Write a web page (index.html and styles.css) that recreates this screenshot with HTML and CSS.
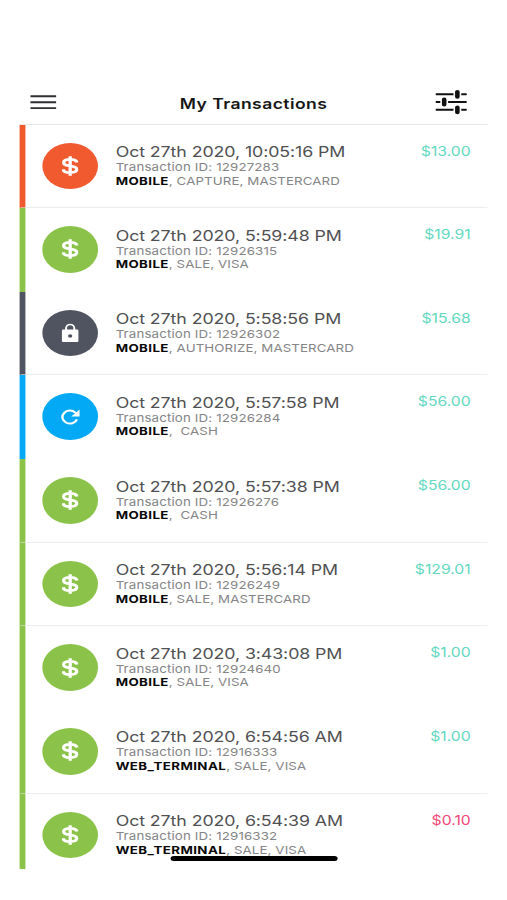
FILE: index.html
```
<!DOCTYPE html>
<html lang="en">
<head>
<meta charset="utf-8">
<title>My Transactions</title>
<link rel="stylesheet" href="styles.css">
</head>
<body>
<svg class="defs" aria-hidden="true">
  <symbol id="dollar" viewBox="0 0 14 20"><path d="M7 .2v3.2M7 16.6v3.2M12.700 6.5C12.100 4.3 10 3.400 7 3.400 3.700 3.400 1.600 4.500 1.600 6.7c0 4.6 10.900 2 10.900 6.6 0 2.1-2.200 3.300-5.500 3.300-3.300 0-5.500-1-5.900-3.4M7 3v14" fill="none" stroke="currentColor" stroke-width="2.7"/></symbol>
  <symbol id="lock" viewBox="0 0 14 20"><path d="M3.6 8V5.2a3.4 3.7 0 0 1 6.8 0V8" fill="none" stroke="currentColor" stroke-width="1.6"/><path fill-rule="evenodd" fill="currentColor" d="M1.3 6.500h11.4Q14 6.500 14 7.800v9.900q0 1.3-1.3 1.3H1.3Q0 19 0 17.700V7.800Q0 6.500 1.300 6.500zM7 11.200a1.800 1.800 0 1 0 0 3.600 1.800 1.800 0 0 0 0-3.600z"/></symbol>
  <symbol id="refresh" viewBox="0 0 16 16"><path d="M13.600 10.400A6.200 6.500 0 1 1 12.300 3.600L14 5.300" fill="none" stroke="currentColor" stroke-width="2"/><path fill="currentColor" d="M15.800 .5v7H8.900z"/></symbol>
</svg>
<div class="screen">
  <header class="header">
    <svg class="menu" viewBox="0 0 22 14"><path d="M0 1.300h21.400M0 7.200h21.400M0 13.100h21.400" stroke="#303034" stroke-width="1.900"/></svg>
    <h1 class="heading">My Transactions</h1>
    <svg class="filter" viewBox="0 0 26 26"><path d="M.6 5.300h24.300M.6 13h24.300M.6 20.800h24.300" stroke="#111" stroke-width="2" stroke-linecap="round"/><path d="M14.800 5.300h6.400M3.900 13h6.400M14.800 20.800h6.400" stroke="#fff" stroke-width="3"/><path d="M18 2.800v5M7.100 10.500v5M18 18.300v5" stroke="#111" stroke-width="3.800" stroke-linecap="round"/></svg>
  </header>
  <main class="list">
    <article class="row orange line"><div class="badge"><svg><use href="#dollar"/></svg></div><div class="info"><h2>Oct 27th 2020, 10:05:16 PM</h2><p class="id">Transaction ID: 12927283</p><p class="type"><b>MOBILE</b>, CAPTURE, MASTERCARD</p></div><span class="amount">$13.00</span></article>
    <article class="row green"><div class="badge"><svg><use href="#dollar"/></svg></div><div class="info"><h2>Oct 27th 2020, 5:59:48 PM</h2><p class="id">Transaction ID: 12926315</p><p class="type"><b>MOBILE</b>, SALE, VISA</p></div><span class="amount">$19.91</span></article>
    <article class="row slate line"><div class="badge"><svg><use href="#lock"/></svg></div><div class="info"><h2>Oct 27th 2020, 5:58:56 PM</h2><p class="id">Transaction ID: 12926302</p><p class="type"><b>MOBILE</b>, AUTHORIZE, MASTERCARD</p></div><span class="amount">$15.68</span></article>
    <article class="row blue"><div class="badge"><svg class="round"><use href="#refresh"/></svg></div><div class="info"><h2>Oct 27th 2020, 5:57:58 PM</h2><p class="id">Transaction ID: 12926284</p><p class="type"><b>MOBILE</b>,&nbsp; CASH</p></div><span class="amount">$56.00</span></article>
    <article class="row green line"><div class="badge"><svg><use href="#dollar"/></svg></div><div class="info"><h2>Oct 27th 2020, 5:57:38 PM</h2><p class="id">Transaction ID: 12926276</p><p class="type"><b>MOBILE</b>,&nbsp; CASH</p></div><span class="amount">$56.00</span></article>
    <article class="row green line"><div class="badge"><svg><use href="#dollar"/></svg></div><div class="info"><h2>Oct 27th 2020, 5:56:14 PM</h2><p class="id">Transaction ID: 12926249</p><p class="type"><b>MOBILE</b>, SALE, MASTERCARD</p></div><span class="amount">$129.01</span></article>
    <article class="row green"><div class="badge"><svg><use href="#dollar"/></svg></div><div class="info"><h2>Oct 27th 2020, 3:43:08 PM</h2><p class="id">Transaction ID: 12924640</p><p class="type"><b>MOBILE</b>, SALE, VISA</p></div><span class="amount">$1.00</span></article>
    <article class="row green line"><div class="badge"><svg><use href="#dollar"/></svg></div><div class="info"><h2>Oct 27th 2020, 6:54:56 AM</h2><p class="id">Transaction ID: 12916333</p><p class="type"><b>WEB_TERMINAL</b>, SALE, VISA</p></div><span class="amount">$1.00</span></article>
    <article class="row green"><div class="badge"><svg><use href="#dollar"/></svg></div><div class="info"><h2>Oct 27th 2020, 6:54:39 AM</h2><p class="id">Transaction ID: 12916332</p><p class="type"><b>WEB_TERMINAL</b>, SALE, VISA</p></div><span class="amount negative">$0.10</span></article>
  </main>
  <div class="home-indicator"></div>
</div>
</body>
</html>
```
FILE: styles.css
```
* { box-sizing: border-box; }
body { margin: 0; height: 900px; overflow: hidden; background: #fff; }
.defs { position: absolute; width: 0; height: 0; }
.screen {
  position: relative;
  width: 419px;
  height: 900px;
  padding: 80px 15.7px 0 15.900px;
  transform: scaleX(1.21);
  transform-origin: 0 0;
  font-family: Inter, "Liberation Sans", sans-serif;
}
.header {
  display: flex;
  align-items: center;
  height: 44.5px;
  padding: 0 17.500px 0 9px;
  border-bottom: 1px solid #e6e6e7;
}
.menu { width: 22px; height: 14px; }
.heading { flex: 1; margin: 4px 0 0; padding-left: 101.700px; font-size: 14.5px; line-height: 20px; font-weight: 600; letter-spacing: .36px; color: #161616; }
.filter { width: 26px; height: 26px; }
.list { height: 744px; overflow: hidden; }
.row {
  position: relative;
  display: flex;
  height: 83.65px;
  padding: 18px 14.300px 0 13.700px;
  border-left: 5px solid var(--accent);
}
.line::after { content: ""; position: absolute; left: -4px; right: 0; bottom: 0; height: 1px; background: rgba(225, 225, 228, .6); z-index: 1; }
.orange { --accent: #f1592f; }
.green { --accent: #8bc34a; }
.slate { --accent: #505461; }
.blue { --accent: #03a9f4; }
.badge {
  display: flex;
  align-items: center;
  justify-content: center;
  flex: none;
  width: 46.700px;
  height: 46.700px;
  border-radius: 50%;
  background: var(--accent);
  color: #fff;
}
.badge svg { width: 14px; height: 20px; }
.badge .round { width: 16px; height: 16px; }
.info { flex: 1; padding: .500px 0 0 14.300px; white-space: nowrap; }
.info h2, .info p { margin: 0; }
.info h2 { font-size: 14.700px; line-height: 18px; font-weight: 400; letter-spacing: -.07px; color: #505052; }
.info p { font-size: 11px; line-height: 13.500px; letter-spacing: .12px; color: #858587; }
.info .type { letter-spacing: .08px; }
.info b { color: #080808; font-weight: 700; letter-spacing: .33px; }
.amount { font-size: 13px; line-height: 17px; letter-spacing: 0; color: #62d8c1; }
.negative { color: #f04878; }
.home-indicator { position: absolute; left: 140.500px; top: 856px; width: 138.500px; height: 5px; border-radius: 3px; background: #000; }
```
